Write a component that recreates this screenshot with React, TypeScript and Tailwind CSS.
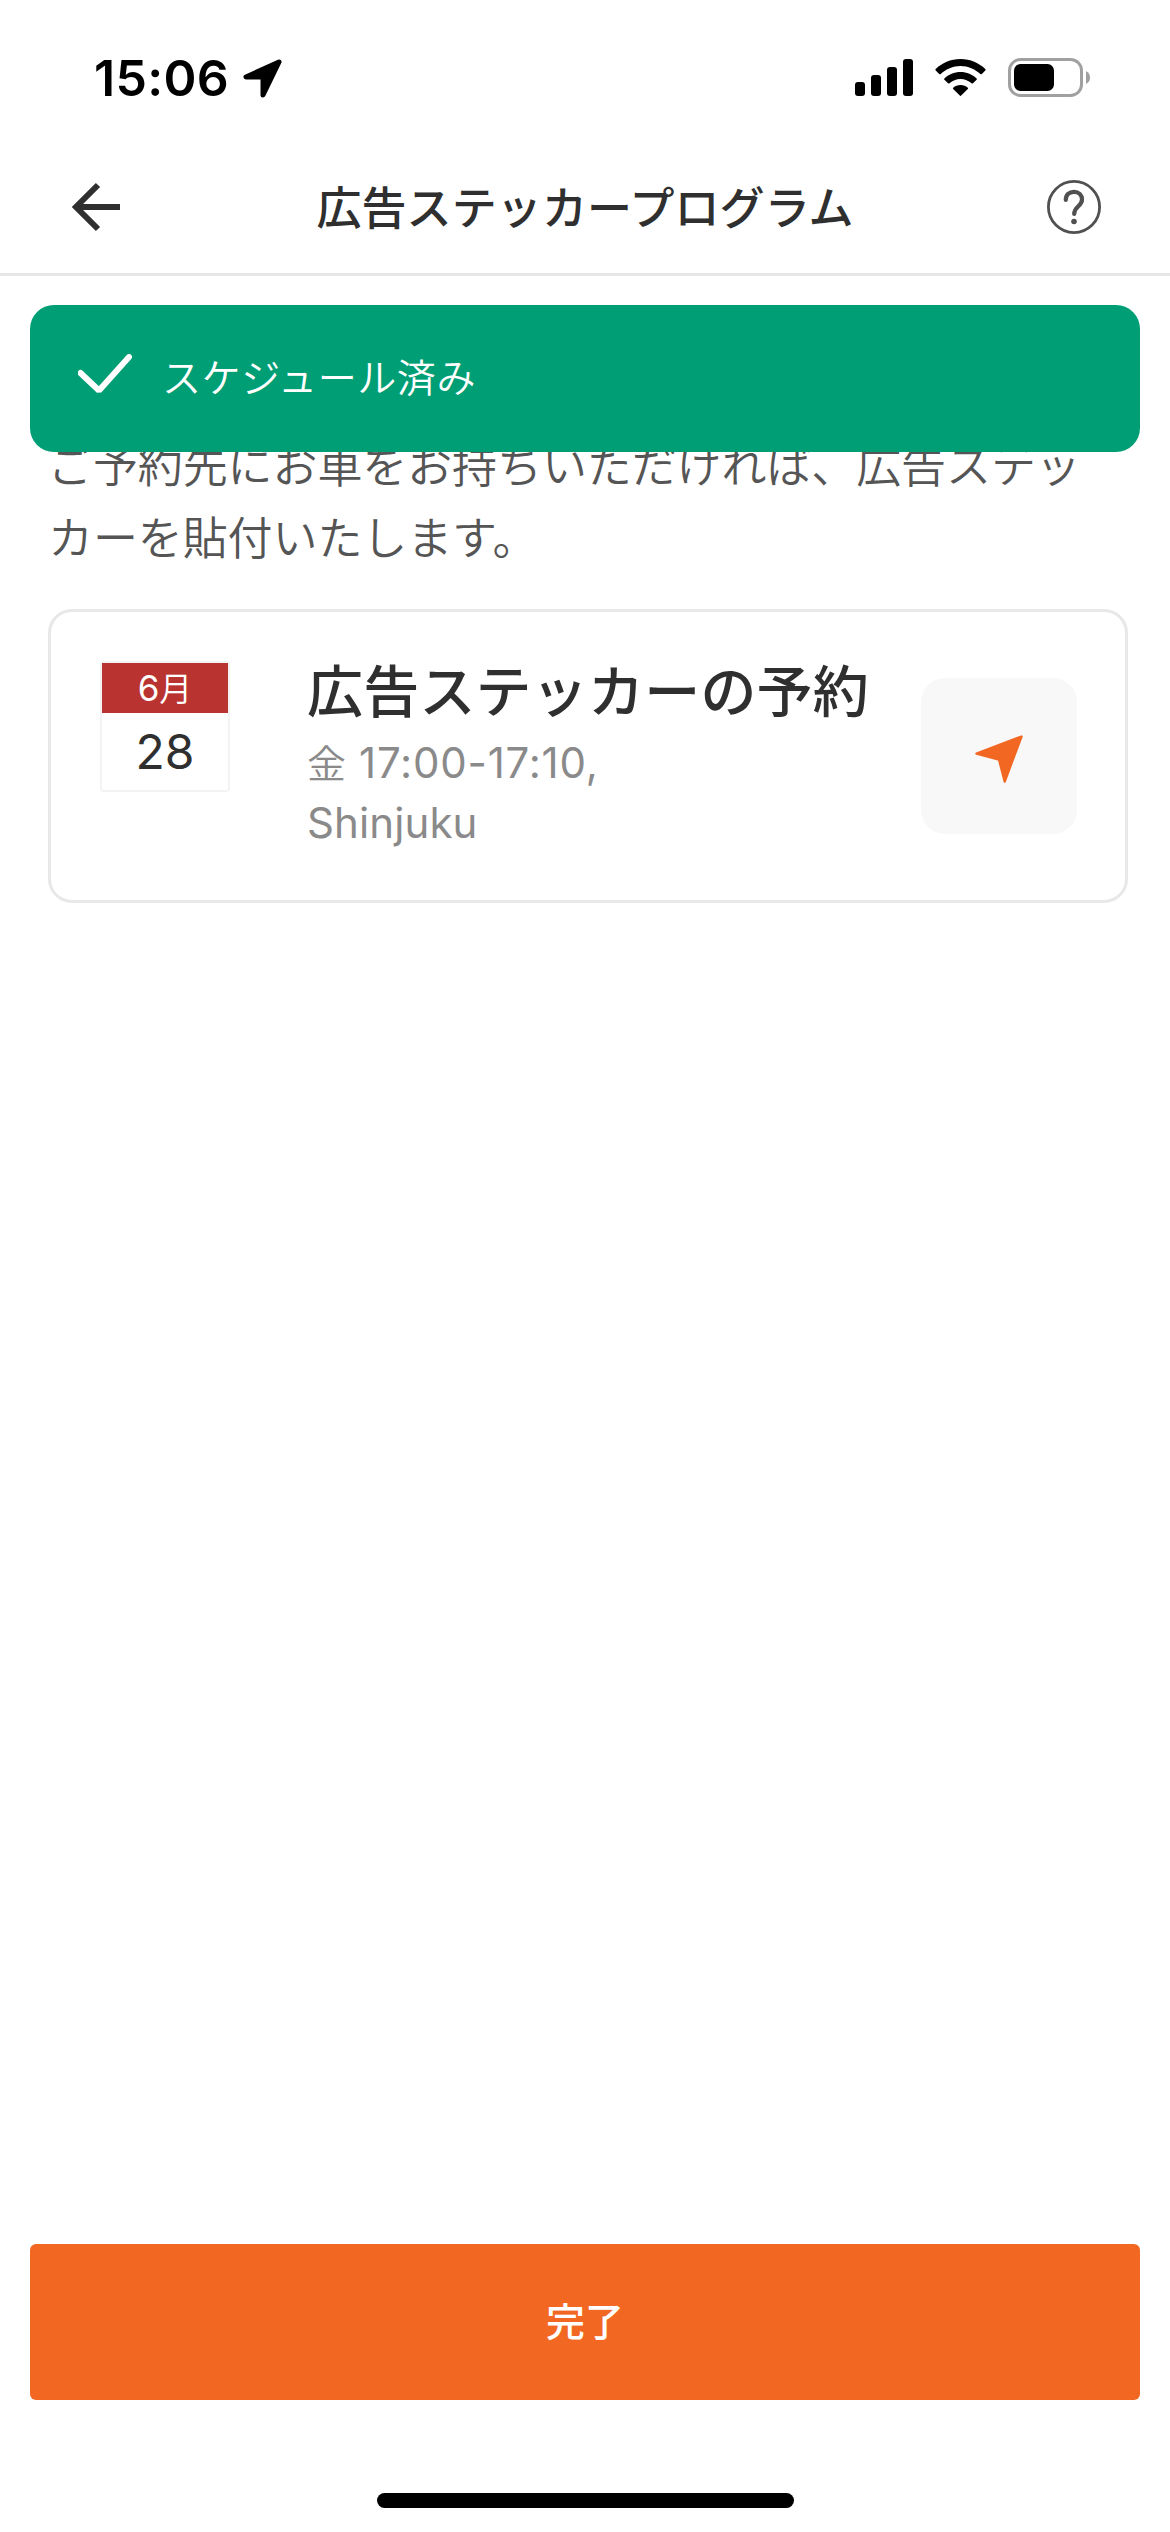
import type { ReactNode } from 'react'

type Appointment = {
  month: string
  day: number
  title: string
  weekday: string
  time: string
  place: string
}

const appointment: Appointment = {
  month: '月',
  day: 28,
  title: '広告ステッカーの予約',
  weekday: '金',
  time: '17:00-17:10,',
  place: 'Shinjuku',
}

export default function App() {
  return (
    <div className="relative flex h-[2532px] w-[1170px] flex-col bg-white font-['Inter','Noto_Sans_CJK_JP',sans-serif] text-[#2f2f2f]">
      <StatusBar />
      <Header title="広告ステッカープログラム" />
      <main className="flex flex-1 flex-col px-12 pt-[155px]">
        <p className="w-[1050px] text-[45px] leading-[72px] font-[350] tracking-[-0.1px] text-[#555]">
          ご予約先にお車をお持ちいただければ、広告ステッカーを貼付いたします。
        </p>
        <AppointmentCard item={appointment} />
      </main>
      <footer className="flex flex-col items-center px-[30px] pb-6">
        <button className="h-[156px] w-full rounded-md bg-[#f26722] text-[39px] font-medium text-white">完了</button>
        <div className="mt-[93px] h-[15px] w-[417px] rounded-full bg-black" />
      </footer>
      <Toast>スケジュール済み</Toast>
    </div>
  )
}

function StatusBar() {
  return (
    <div className="flex h-[141px] items-start justify-between pt-[57px] pr-[79px] pl-[94px]">
      <div className="flex items-start gap-[13px]">
        <span className="text-[50px] leading-[42px] font-semibold tracking-[0.3px] text-black">15:06</span>
        <svg width="40" height="42" viewBox="0 0 40 42" className="text-black">
          <path
            d="M37 5 L4 20 H21 V38 Z"
            fill="currentColor"
            stroke="currentColor"
            strokeWidth="5"
            strokeLinejoin="round"
          />
        </svg>
      </div>
      <div className="flex items-start text-black">
        <svg width="58" height="42" viewBox="0 0 58 42" fill="currentColor">
          <rect x="0" y="25" width="10" height="14" rx="3" />
          <rect x="16" y="18" width="10" height="21" rx="3" />
          <rect x="32" y="10" width="10" height="29" rx="3" />
          <rect x="48" y="2" width="10" height="37" rx="3" />
        </svg>
        <svg width="51" height="42" viewBox="0 0 51 42" fill="currentColor" className="ml-[22px]">
          <path d="M25.5 2 C35.5 2 44 6 50.3 12 Q51 12.8 50.3 13.5 L46.8 17 Q46.1 17.6 45.3 17 C40 12 33 9 25.5 9 C18 9 11 12 5.7 17 Q4.9 17.6 4.2 17 L.7 13.5 Q0 12.8 .7 12 C7 6 15.5 2 25.5 2 Z" />
          <path d="M25.5 15 C31.8 15 37.5 17.5 41.6 21.4 Q42.3 22.1 41.6 22.8 L38 26.3 Q37.3 26.9 36.5 26.3 C33.5 23.6 29.7 22 25.5 22 C21.3 22 17.5 23.6 14.5 26.3 Q13.7 26.9 13 26.3 L9.4 22.8 Q8.7 22.1 9.4 21.4 C13.5 17.5 19.2 15 25.5 15 Z" />
          <path d="M25.5 28 C28.4 28 30.9 29 32.8 30.7 Q33.5 31.4 32.8 32.1 L26.2 38.6 Q25.5 39.2 24.8 38.6 L18.2 32.1 Q17.5 31.4 18.2 30.7 C20.1 29 22.6 28 25.5 28 Z" />
        </svg>
        <svg width="83" height="42" viewBox="0 0 83 42" className="ml-[22px]">
          <rect x="1.5" y="2.5" width="72" height="36" rx="11" fill="none" stroke="#a0a0a0" strokeWidth="3" />
          <rect x="6" y="7" width="40" height="27" rx="6.5" fill="currentColor" />
          <path d="M78 14 Q82 16 82 20.5 T78 27 Z" fill="#a0a0a0" />
        </svg>
      </div>
    </div>
  )
}

function Header({ title }: { title: string }) {
  return (
    <header className="flex h-[135px] items-center justify-between border-b-[3px] border-[#e6e6e6] pr-[69px] pl-[72px]">
      <svg width="48" height="50" viewBox="0 0 48 50" fill="none" stroke="#2f2f2f" strokeWidth="6">
        <path d="M26 3 L4 25 L26 47 M4 25 H48" />
      </svg>
      <h1 className="mt-1 ml-[3px] text-[45px] leading-[60px] font-medium tracking-[0.1px]">{title}</h1>
      <svg width="54" height="54" viewBox="0 0 54 54" fill="none" stroke="#505050">
        <circle cx="27" cy="27" r="25.6" strokeWidth="2.8" />
        <path
          d="M18.8 20 C18.8 14.5 22.3 11.8 27 11.8 C31.8 11.8 35 15.2 35 19.5 C35 26.5 27.2 26 27.2 34"
          strokeWidth="4.2"
          strokeLinecap="round"
        />
        <circle cx="27" cy="41.5" r="2.8" fill="#505050" stroke="none" />
      </svg>
    </header>
  )
}

function Toast({ children }: { children: ReactNode }) {
  return (
    <div className="absolute top-[305px] right-[30px] left-[30px] flex h-[147px] items-center rounded-3xl bg-[#009e74] pl-12 text-white">
      <svg width="54" height="40" viewBox="0 0 54 40" fill="none" className="mb-[9px]">
        <path d="M2.5 19 L21 36.5 L51 3" stroke="currentColor" strokeWidth="6" strokeLinecap="round" strokeLinejoin="bevel" />
      </svg>
      <span className="mb-[2px] ml-[30px] text-[39px] leading-[52px] font-[350] tracking-[0.6px]">{children}</span>
    </div>
  )
}

function AppointmentCard({ item }: { item: Appointment }) {
  return (
    <section className="mt-[34px] flex h-[294px] w-[1080px] items-start rounded-3xl border-[3px] border-[#e8e8e8] pt-[49px] pr-12 pl-[49px]">
      <div className="flex h-[131px] w-[130px] flex-col rounded-[4px] border-2 border-[#f3f3f3] text-center">
        <div className="h-[50px] bg-[#b93330] text-[35px] leading-[50px] text-white">
          6<span className="text-[33px] font-[350]">{item.month}</span>
        </div>
        <div className="text-[48px] leading-[78px]">{item.day}</div>
      </div>
      <div className="ml-[77px] flex flex-1 flex-col">
        <h2 className="mt-px text-[56px] leading-[60px] font-medium tracking-[0.2px] whitespace-nowrap">{item.title}</h2>
        <p className="mt-[11px] text-[42px] leading-[60px] text-[#8a8a8a]">
          <span className="mr-[13px] text-[39px] leading-none font-[350]">{item.weekday}</span>
          <span className="tracking-[0.8px]">{item.time}</span>
          <br />
          <span className="tracking-[0.1px]">{item.place}</span>
        </p>
      </div>
      <button className="mt-[17px] flex h-[156px] w-[156px] items-center justify-center rounded-3xl bg-[#f8f8f8]">
        <svg width="48" height="48" viewBox="0 0 48 48" className="mb-[-6px]">
          <path
            d="M46.5 1.5 L1.5 18.5 L24 24.5 L29.7 46.5 Z"
            fill="#f26722"
            stroke="#f26722"
            strokeWidth="2.4"
            strokeLinejoin="round"
          />
        </svg>
      </button>
    </section>
  )
}
